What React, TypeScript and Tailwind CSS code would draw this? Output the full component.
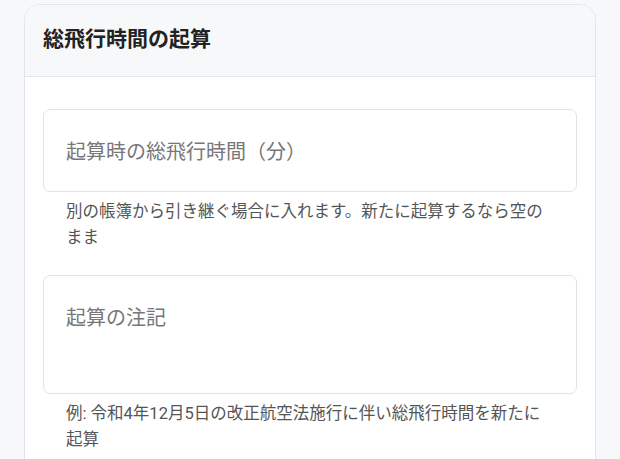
const FONT = { fontFamily: "Roboto, 'Noto Sans CJK JP', 'Noto Sans', sans-serif" };

function Field({
  placeholder,
  help,
  multiline,
}: {
  placeholder: string;
  help: string;
  multiline?: boolean;
}) {
  return (
    <div className="flex flex-col">
      {multiline ? (
        <textarea
          placeholder={placeholder}
          rows={3}
          className="h-[119px] w-full resize-none rounded-[7px] border border-[#e1e3e6] bg-white px-[22px] pt-[28px] text-[20px] leading-[28px] text-[#333] outline-none placeholder:text-[#777]"
        />
      ) : (
        <input
          placeholder={placeholder}
          className="h-[83px] w-full rounded-[7px] border border-[#e1e3e6] bg-white px-[22px] pt-[2px] text-[20px] text-[#333] outline-none placeholder:text-[#777]"
        />
      )}
      <p className="mt-[7px] px-[23px] text-[16.5px] leading-[26px] text-[#555]">{help}</p>
    </div>
  );
}

export default function App() {
  return (
    <div className="min-h-[459px] bg-[#f7f8fa] px-6 pt-1" style={FONT}>
      <div className="overflow-hidden rounded-[16px] border border-[#e3e5e8] bg-white">
        <div className="flex h-[72px] items-center border-b border-[#e3e5e8] bg-[#f7f8fa] px-[18px] pb-[1px]">
          <h2 className="text-[21px] font-bold text-[#222]">総飛行時間の起算</h2>
        </div>
        <div className="flex flex-col gap-[24px] px-[18px] pt-[32px] pb-6">
          <Field
            placeholder="起算時の総飛行時間（分）"
            help="別の帳簿から引き継ぐ場合に入れます。新たに起算するなら空のまま"
          />
          <Field
            multiline
            placeholder="起算の注記"
            help="例: 令和4年12月5日の改正航空法施行に伴い総飛行時間を新たに起算"
          />
        </div>
      </div>
    </div>
  );
}
